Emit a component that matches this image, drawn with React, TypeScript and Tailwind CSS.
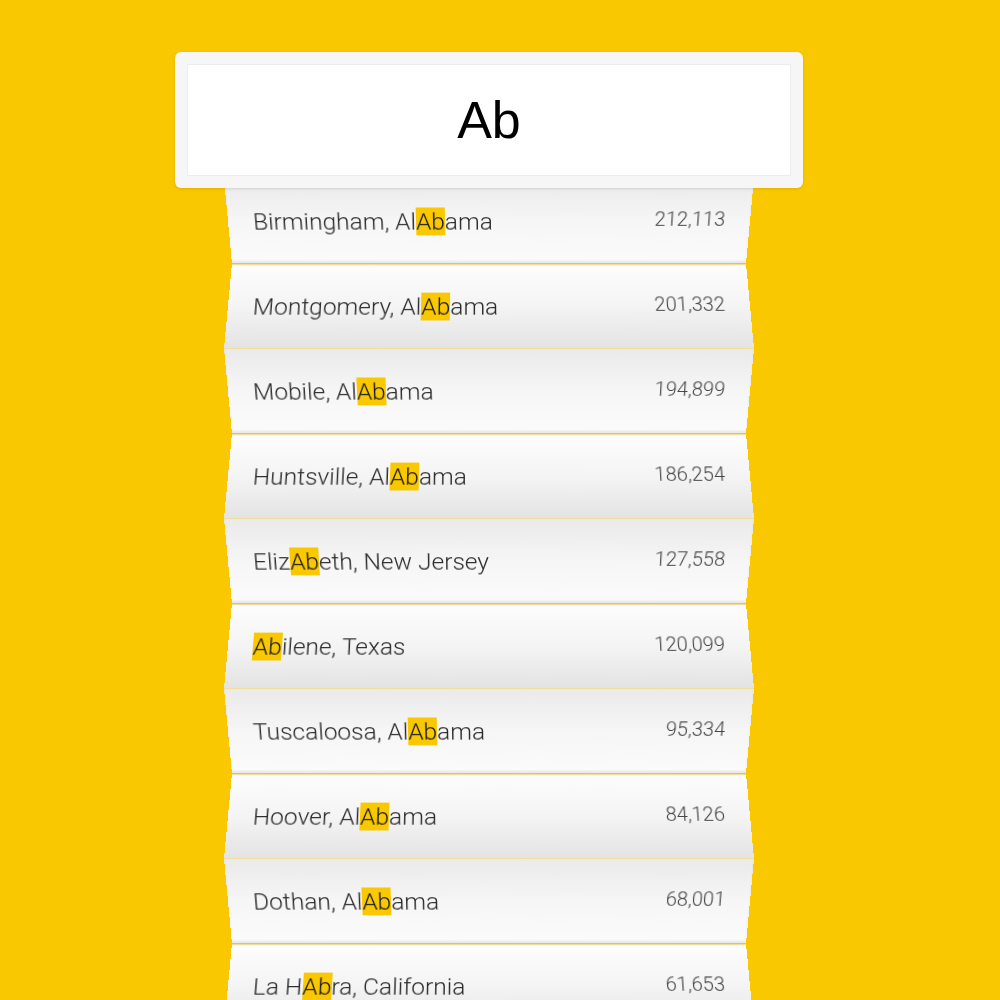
import React from 'react';

interface City {
  before: string;
  after: string;
  pop: string;
}

const cities: City[] = [
  { before: 'Birmingham, Al', after: 'ama', pop: '212,113' },
  { before: 'Montgomery, Al', after: 'ama', pop: '201,332' },
  { before: 'Mobile, Al', after: 'ama', pop: '194,899' },
  { before: 'Huntsville, Al', after: 'ama', pop: '186,254' },
  { before: 'Eliz', after: 'eth, New Jersey', pop: '127,558' },
  { before: '', after: 'ilene, Texas', pop: '120,099' },
  { before: 'Tuscaloosa, Al', after: 'ama', pop: '95,334' },
  { before: 'Hoover, Al', after: 'ama', pop: '84,126' },
  { before: 'Dothan, Al', after: 'ama', pop: '68,001' },
  { before: 'La H', after: 'ra, California', pop: '61,653' },
];

export default function App() {
  return (
    <div className="h-screen overflow-hidden bg-[#fac800] font-['Roboto','Liberation_Sans',sans-serif]">
      <div className="w-[628px] ml-[175px] pt-[52px]">
        {/* Search box */}
        <div className="relative z-10 bg-[#f6f6f6] rounded-md p-3 shadow-[0_1px_3px_rgba(0,0,0,0.12)]">
          <div className="h-[112px] bg-white border border-[#ececec] flex items-center justify-center">
            <span className="text-[52px] text-black font-['Liberation_Sans',Arial,sans-serif] leading-none">Ab</span>
          </div>
        </div>

        {/* Folded results */}
        <div className="-mt-[10px] flex flex-col items-center">
          {cities.map((c, i) => {
            const odd = i % 2 === 0;
            return (
              <div key={c.pop} className="h-[85px] w-full flex items-center justify-center">
                <div
                  className={`w-[522px] h-[88px] shrink-0 flex items-center justify-between pl-[25px] pr-[25px] border-t border-[#f1dd9c] ${
                    odd
                      ? '[transform:perspective(800px)_rotateX(-16deg)] bg-gradient-to-b from-[#eaeaea] via-[#f6f6f6] to-[#fbfbfb] shadow-[inset_0_-2px_2px_rgba(0,0,0,0.08)]'
                      : '[transform:perspective(800px)_rotateX(16deg)] bg-gradient-to-b from-[#fdfdfd] via-[#f4f4f4] to-[#e3e3e3]'
                  }`}
                >
                  <span className="text-[24.5px] font-light text-[#2b2b2b] leading-[28px]">
                    {c.before}
                    <span className="bg-[#fac800] text-[#1a1a1a]">Ab</span>
                    {c.after}
                  </span>
                  <span className="text-[20px] font-light text-[#444] leading-[22px] mb-[6px]">{c.pop}</span>
                </div>
              </div>
            );
          })}
        </div>
      </div>
    </div>
  );
}
